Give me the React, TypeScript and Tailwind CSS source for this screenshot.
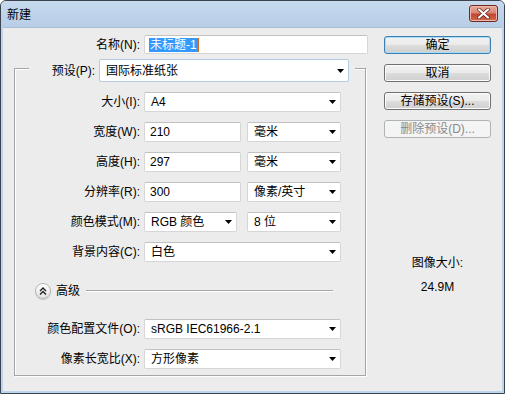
import React from "react";

const btnGradient =
  "bg-[linear-gradient(#f2f2f2_0%,#ebebeb_50%,#dddddd_50%,#cfcfcf_100%)]";

function Arrow() {
  return (
    <svg width="7" height="4" viewBox="0 0 7 4" className="shrink-0">
      <path d="M0 0H7L3.5 4Z" fill="#000" />
    </svg>
  );
}

function TextBox({ value, width }: { value: string; width: string }) {
  return (
    <div
      className={`${width} h-[20px] flex items-center pl-[5px] bg-white border border-[#d6d6d6] border-t-[#c2c2c2] rounded-[2px]`}
    >
      {value}
    </div>
  );
}

function Select({
  value,
  width,
  focused,
}: {
  value: string;
  width: string;
  focused?: boolean;
}) {
  return (
    <div
      className={`${width} ${
        focused ? "h-[23px] border-[#b3cbe4]" : "h-[20px] border-[#d6d6d6] border-t-[#c2c2c2]"
      } flex items-center justify-between pl-[6px] pr-[4px] bg-white border rounded-[2px]`}
    >
      <span>{value}</span>
      <Arrow />
    </div>
  );
}

function Row({ label, children }: { label: string; children: React.ReactNode }) {
  return (
    <div className="flex items-center h-[20px]">
      <div className="w-[125px] text-right">{label}</div>
      <div className="flex gap-[6px] ml-[4px]">{children}</div>
    </div>
  );
}

function Button({
  label,
  primary,
  disabled,
}: {
  label: string;
  primary?: boolean;
  disabled?: boolean;
}) {
  if (disabled) {
    return (
      <div className="h-[18px] flex items-center justify-center border border-[#adb2b5] rounded-[3px] bg-[#f4f4f4] text-[#8a8a8a]">
        {label}
      </div>
    );
  }
  return (
    <div
      className={`h-[18px] flex items-center justify-center border rounded-[3px] ${btnGradient} ${
        primary
          ? "border-[#3c7fb1] shadow-[inset_0_0_0_1px_#a8dcf7]"
          : "border-[#707070] shadow-[inset_0_0_0_1px_#fcfcfc]"
      }`}
    >
      {label}
    </div>
  );
}

export default function App() {
  return (
    <div className="w-[505px] h-[394px] flex flex-col border border-[#3b4250] rounded-t-[6px] overflow-hidden bg-[#bdd4eb] text-[12px] leading-[14px] text-black font-['Liberation_Sans','Noto_Sans_CJK_SC',sans-serif]">
      {/* Title bar */}
      <div className="h-[26px] shrink-0 flex items-start justify-between bg-[linear-gradient(#c7daee,#b7cee7)]">
        <div className="pl-[6px] pt-[7px]">新建</div>
        <div className="mt-[4px] mr-[6px] w-[29px] h-[17px] rounded-[3px] border border-[#6e2a22] flex items-center justify-center bg-[linear-gradient(#e9a99a_0%,#d98876_45%,#c5452f_55%,#cf6a4e_100%)] shadow-[inset_0_0_0_1px_#f0b8a8]">
          <svg width="13" height="11" viewBox="0 0 13 11">
            <path
              d="M2 1.5L11 9.5M11 1.5L2 9.5"
              stroke="#5a2018"
              strokeWidth="3.6"
              strokeLinecap="round"
            />
            <path
              d="M2 1.5L11 9.5M11 1.5L2 9.5"
              stroke="#fff"
              strokeWidth="2.2"
              strokeLinecap="round"
            />
          </svg>
        </div>
      </div>

      {/* Client area */}
      <div className="flex-1 mx-[2px] mb-[2px] bg-[#ececec] border-t border-[#a8bdd3] flex pl-[11px] pt-[7px]">
        {/* Left column */}
        <div className="w-[355px] flex flex-col">
          <div className="flex items-center h-[19px]">
            <div className="w-[126px] text-right">名称(N):</div>
            <div className="ml-[4px] w-[224px] h-[19px] flex items-center pl-[4px] bg-white border border-[#d6d6d6] border-t-[#c2c2c2] rounded-[2px]">
              <span className="bg-[#3399ff] text-white px-[1px]">未标题-1</span>
              <span className="w-[1px] h-[14px] bg-[#d06a1c]" />
            </div>
          </div>

          {/* Group box */}
          <div className="mt-[14px] w-[352px] border border-[#a5a5a5] shadow-[1px_1px_0_#fff,inset_1px_1px_0_#fff] flex flex-col pb-[6px]">
            <div className="-mt-[10px] ml-[14px] mr-[10px] bg-[#ececec] flex items-center h-[23px]">
              <div className="w-[66px] text-right">预设(P):</div>
              <div className="ml-[4px]">
                <Select value="国际标准纸张" width="w-[250px]" focused />
              </div>
            </div>

            <div className="flex flex-col gap-[10px] mt-[10px]">
              <Row label="大小(I):">
                <Select value="A4" width="w-[197px]" />
              </Row>
              <Row label="宽度(W):">
                <TextBox value="210" width="w-[97px]" />
                <Select value="毫米" width="w-[94px]" />
              </Row>
              <Row label="高度(H):">
                <TextBox value="297" width="w-[97px]" />
                <Select value="毫米" width="w-[94px]" />
              </Row>
              <Row label="分辨率(R):">
                <TextBox value="300" width="w-[97px]" />
                <Select value="像素/英寸" width="w-[94px]" />
              </Row>
              <Row label="颜色模式(M):">
                <Select value="RGB 颜色" width="w-[93px]" />
                <div className="ml-[4px]">
                  <Select value="8 位" width="w-[94px]" />
                </div>
              </Row>
              <Row label="背景内容(C):">
                <Select value="白色" width="w-[197px]" />
              </Row>
            </div>

            {/* Advanced */}
            <div className="mt-[21px] h-[16px] flex items-center ml-[20px] mr-[32px]">
              <div className="w-[16px] h-[16px] rounded-full border border-[#b5b5b5] bg-[linear-gradient(#ffffff,#e2e2e2)] flex items-center justify-center shadow-[0_1px_1px_#c8c8c8]">
                <svg width="8" height="8" viewBox="0 0 8 8">
                  <path
                    d="M1 4L4 1L7 4M1 7.5L4 4.5L7 7.5"
                    fill="none"
                    stroke="#222"
                    strokeWidth="1.4"
                  />
                </svg>
              </div>
              <span className="ml-[5px]">高级</span>
              <div className="ml-[6px] flex-1 h-[2px] border-t border-[#a5a5a5] border-b border-b-white" />
            </div>

            <div className="flex flex-col gap-[10px] mt-[20px]">
              <Row label="颜色配置文件(O):">
                <Select value="sRGB IEC61966-2.1" width="w-[197px]" />
              </Row>
              <Row label="像素长宽比(X):">
                <Select value="方形像素" width="w-[197px]" />
              </Row>
            </div>
          </div>
        </div>

        {/* Right column */}
        <div className="ml-[15px] w-[107px] flex flex-col pt-[1px]">
          <div className="flex flex-col gap-[10px]">
            <Button label="确定" primary />
            <Button label="取消" />
            <Button label="存储预设(S)..." />
            <Button label="删除预设(D)..." disabled />
          </div>
          <div className="mt-[118px] text-center">图像大小:</div>
          <div className="mt-[10px] text-center">24.9M</div>
        </div>
      </div>
    </div>
  );
}
